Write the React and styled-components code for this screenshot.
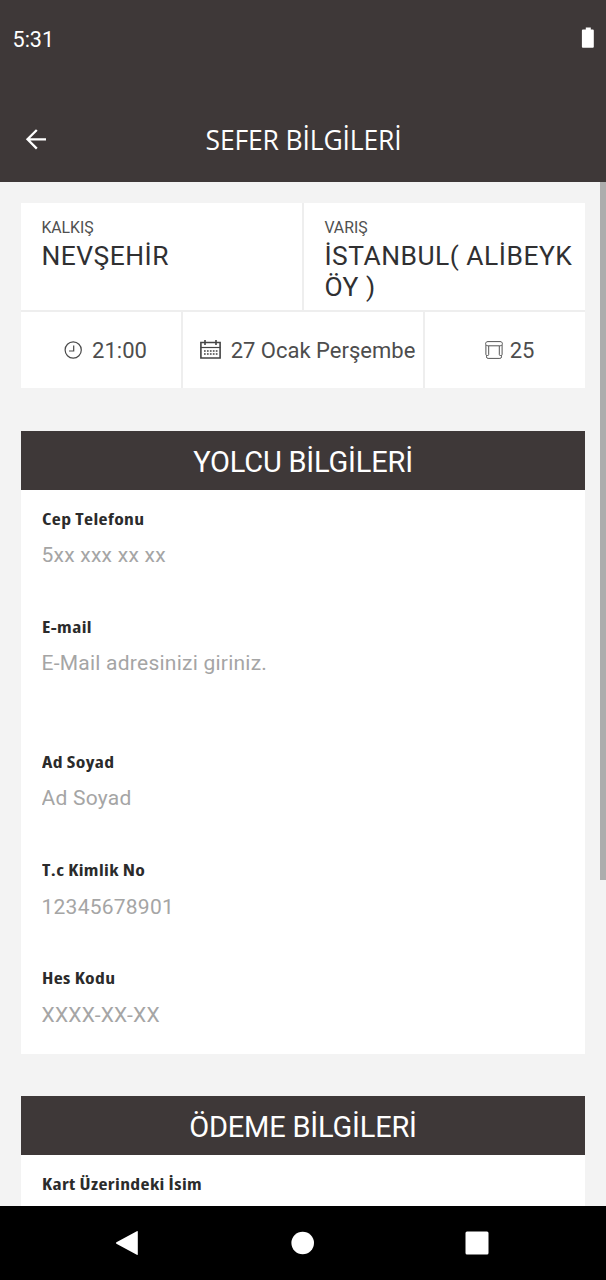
import styled, { createGlobalStyle } from 'styled-components'

const GlobalStyle = createGlobalStyle`
  *{
    box-sizing: border-box;
  }
  body{
    margin: 0;
    background-color: #f3f3f3;
    font-family: Roboto, sans-serif;
  }
  svg{
    display: block;
  }
`

const Screen = styled.div`
  height: 1280px;
  display: flex;
  flex-direction: column;
  overflow: hidden;
`

const TopArea = styled.div`
  height: 182px;
  flex-shrink: 0;
  background-color: #3e3838;
  color: #fff;
`

const StatusBar = styled.div`
  height: 96px;
  padding: 27px 12px 0 12.5px;
  display: flex;
  justify-content: space-between;
  font-size: 21.6px;
  line-height: 25px;
`

const Header = styled.header`
  height: 86px;
  padding: 0 23px 0 24px;
  display: grid;
  grid-template-columns: 24px 1fr 24px;
  align-items: center;
  h1{
    margin: 0;
    padding-top: 2px;
    font-family: "Open Sans", "Noto Sans", sans-serif;
    font-size: 26.5px;
    line-height: 36px;
    font-weight: 400;
    text-align: center;
    letter-spacing: -0.15px;
  }
`

const Content = styled.main`
  flex: 1;
  min-height: 0;
  display: flex;
  overflow: hidden;
`

const Column = styled.div`
  flex: 1;
  padding: 21px 15px 0 21px;
`

const ScrollThumb = styled.div`
  width: 6px;
  height: 698px;
  background-color: #adadad;
`

const Trip = styled.section`
  display: grid;
  row-gap: 2px;
  background-color: #eee;
`

const TripRow = styled.div`
  display: grid;
  column-gap: 2px;
  grid-template-columns: ${props => props.$columns};
  height: ${props => props.$height};
`

const Place = styled.div`
  background-color: #fff;
  padding: 15px 10px 0 20.4px;
  span{
    display: block;
    font-size: 15.8px;
    line-height: 19px;
    color: #505050;
  }
  p{
    margin: 4px 0 0;
    font-size: 26.4px;
    line-height: 31px;
    letter-spacing: 0.5px;
    color: #303032;
    word-break: break-all;
  }
`

const Info = styled.div`
  background-color: #fff;
  display: flex;
  align-items: center;
  justify-content: center;
  gap: ${props => props.$gap};
  padding-left: 9px;
  font-size: 22px;
  line-height: 26px;
  color: #4d4d4d;
  white-space: nowrap;
  svg{
    margin-bottom: 1px;
  }
  span{
    padding-top: 2px;
  }
`

const Panel = styled.section`
  margin-top: ${props => props.$top};
  height: ${props => props.$height};
  background-color: #fff;
`

const PanelTitle = styled.h2`
  margin: 0;
  height: 59px;
  background-color: #3e3838;
  color: #fff;
  font-size: 29px;
  line-height: 62px;
  font-weight: 400;
  text-align: center;
  letter-spacing: -0.2px;
`

const Field = styled.label`
  display: block;
  height: 108.3px;
  padding: 16.7px 20.5px 0;
  margin-bottom: ${props => props.$gap || '0'};
  span{
    display: block;
    font-family: "Open Sans", "Noto Sans", sans-serif;
    font-size: 16.8px;
    line-height: 24px;
    font-weight: 700;
    font-stretch: 75%;
    letter-spacing: 0.32px;
    color: #2b2b2b;
    transform: scaleX(1.17);
    transform-origin: left;
  }
  input{
    display: block;
    width: 100%;
    height: 30px;
    margin-top: 9.5px;
    padding: 0;
    border: 0;
    outline: 0;
    background: none;
    font-family: Roboto, sans-serif;
    font-size: 21px;
    letter-spacing: 0.24px;
    &::placeholder{
      color: #a5a5a5;
    }
  }
`

const NavBar = styled.nav`
  height: 74px;
  flex-shrink: 0;
  padding: 0 117px 0 115px;
  background-color: #000;
  display: flex;
  align-items: center;
  justify-content: space-between;
`

const BatteryIcon = () => (
    <svg width="13" height="21" viewBox="0 0 13 21" fill="#fff">
        <path d="M4.800.5h5v2h2q1 0 1 1v16.200q0 1-1 1H1.900q-1 0-1-1V3.500q0-1 1-1h2.900z"/>
    </svg>
)

const BackIcon = () => (
    <svg width="24" height="24" viewBox="0 0 24 24" fill="none" stroke="#fff" strokeWidth="2.300">
        <path d="M22 12.300H3.500M12.800 3L3.500 12.300l9.300 9.300"/>
    </svg>
)

const ClockIcon = () => (
    <svg width="18" height="18" viewBox="0 0 18 18" fill="none" stroke="#4a4a4a" strokeWidth="1.200">
        <circle cx="9.200" cy="9" r="8.100"/>
        <path d="M9.700 4.500v5.500H5"/>
    </svg>
)

const CalendarIcon = () => (
    <svg width="21" height="19" viewBox="0 0 21 19" fill="none" stroke="#444">
        <path d="M.9 2.500h19.200v15.500H.9z" strokeWidth="1.600"/>
        <path d="M.7 7.500h19.600" strokeWidth="1.200"/>
        <path d="M5 0v5M16 0v5" strokeWidth="1.600"/>
        <path d="M4 11h13.500M4 14h13.500" strokeWidth="1.700" strokeDasharray="1.700 1.250"/>
    </svg>
)

const SeatIcon = () => (
    <svg width="18" height="18" viewBox="0 0 18 18" fill="none" stroke="#555" strokeWidth="1">
        <path d="M3.500 4.800C1.500 4.800.6 4 .6 2.700S1.500.6 3 .6h12c1.500 0 2.400.8 2.400 2.100s-.9 2.100-2.900 2.100z"/>
        <path d="M.9 4v9.500q0 1 1 1h.8q1 0 1-1V4.800M17.100 4v9.500q0 1-1 1h-.8q-1 0-1-1V4.800"/>
        <path d="M1.500 14.500v1.300q0 1.600 1.600 1.600h11.800q1.600 0 1.600-1.600v-1.300"/>
    </svg>
)

const passengerFields = [
    { label: 'Cep Telefonu', placeholder: '5xx xxx xx xx' },
    { label: 'E-mail', placeholder: 'E-Mail adresinizi giriniz.', gap: '26.5px' },
    { label: 'Ad Soyad', placeholder: 'Ad Soyad' },
    { label: 'T.c Kimlik No', placeholder: '12345678901' },
    { label: 'Hes Kodu', placeholder: 'XXXX-XX-XX' },
]

const App = () => {
    return (
        <Screen>
            <GlobalStyle/>
            <TopArea>
                <StatusBar>
                    <span>5:31</span>
                    <BatteryIcon/>
                </StatusBar>
                <Header>
                    <BackIcon/>
                    <h1>SEFER BİLGİLERİ</h1>
                </Header>
            </TopArea>
            <Content>
                <Column>
                    <Trip>
                        <TripRow $columns="281px 281px" $height="107px">
                            <Place>
                                <span>KALKIŞ</span>
                                <p>NEVŞEHİR</p>
                            </Place>
                            <Place>
                                <span>VARIŞ</span>
                                <p>İSTANBUL( ALİBEYKÖY )</p>
                            </Place>
                        </TripRow>
                        <TripRow $columns="160px 240px 160px" $height="76px">
                            <Info $gap="10px"><ClockIcon/><span>21:00</span></Info>
                            <Info $gap="10px"><CalendarIcon/><span>27 Ocak Perşembe</span></Info>
                            <Info $gap="7px"><SeatIcon/><span>25</span></Info>
                        </TripRow>
                    </Trip>
                    <Panel $top="43px" $height="622.5px">
                        <PanelTitle>YOLCU BİLGİLERİ</PanelTitle>
                        {passengerFields.map(field => (
                            <Field key={field.label} $gap={field.gap}>
                                <span>{field.label}</span>
                                <input placeholder={field.placeholder}/>
                            </Field>
                        ))}
                    </Panel>
                    <Panel $top="42.5px" $height="300px">
                        <PanelTitle>ÖDEME BİLGİLERİ</PanelTitle>
                        <Field>
                            <span>Kart Üzerindeki İsim</span>
                        </Field>
                    </Panel>
                </Column>
                <ScrollThumb/>
            </Content>
            <NavBar>
                <svg width="24" height="26" viewBox="0 0 24 26" fill="#fff">
                    <path d="M22.800 1.800v22.400q0 1.200-1 .6L1.400 13.800q-1-.8 0-1.600L21.800 1.200q1-.6 1 .6z"/>
                </svg>
                <svg width="24" height="24" viewBox="0 0 24 24" fill="#fff">
                    <circle cx="12.700" cy="12" r="11.300"/>
                </svg>
                <svg width="24" height="24" viewBox="0 0 24 24" fill="#fff">
                    <rect x=".5" y=".5" width="23" height="23" rx="1.500"/>
                </svg>
            </NavBar>
        </Screen>
    )
}

export default App
